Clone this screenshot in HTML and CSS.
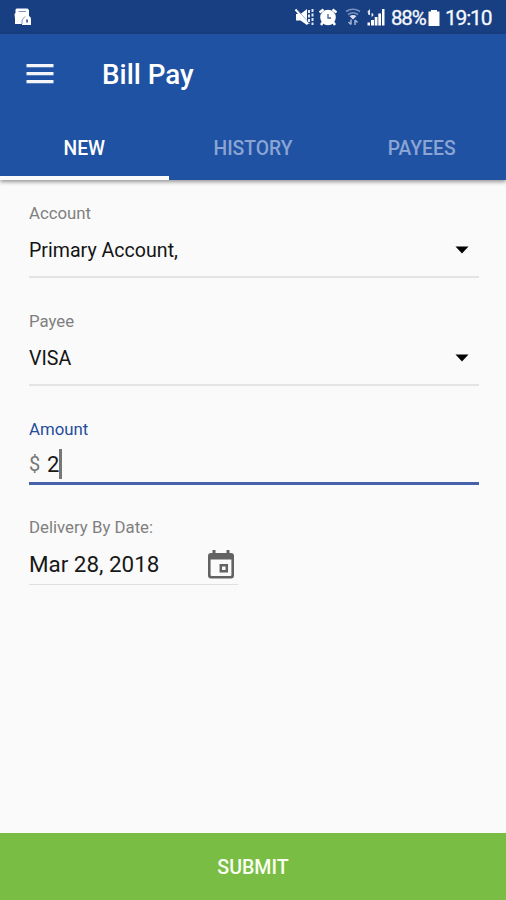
FILE: index.html
```html
<!DOCTYPE html>
<html lang="en">
<head>
<meta charset="utf-8">
<title>Bill Pay</title>
<link rel="stylesheet" href="styles.css">
</head>
<body>
<div class="screen">
  <div class="status">
    <svg class="note" width="18" height="18" viewBox="0 0 18 18"><path fill="#fff" d="M2.500 .5h11L15 2v6q2 1 2 3v6H8v-1H1V11L.5 6 1.500 5V1.500z"/><path stroke="#7d94bf" fill="none" d="M4.500 3.500h7.500"/><path stroke="#8298c2" fill="none" d="M8 16v-4l3-3.500"/><path fill="#183f82" d="M12.300 11.500h1.500v3h-1.500z"/></svg>
    <div class="indicators">
      <svg class="mute" width="19" height="18" viewBox="0 0 19 18"><path fill="#fff" d="M1 6h4.500L12 1v16l-6.500-4.500H1z"/><path stroke="#fff" stroke-width="2" fill="none" d="M.5 1.500L13 16"/><path stroke="#7d94bf" stroke-width=".7" fill="none" d="M2.500 2L13 13.500"/><path stroke="#e3e9f5" stroke-width="2" stroke-dasharray="3 1.500" fill="none" d="M14 2v14M17.500 1v16"/></svg>
      <svg class="alarm" width="18" height="18" viewBox="0 0 18 18"><circle cx="9" cy="9.500" r="7.800" fill="#fff"/><path stroke="#fff" stroke-width="2.500" fill="none" d="M.5 4.500l4-3M17.500 4.500l-4-3M4 14l-2 3M14 14l2 3"/><path stroke="#3d609f" stroke-width="1.300" fill="none" d="M9 6v4h3"/></svg>
      <svg class="wifi" width="16" height="18" viewBox="0 0 16 18"><path stroke="#7890bf" stroke-width="1.600" fill="none" d="M1 3.500q7-4.500 14 0M3 6.500q5-3.500 10 0"/><path fill="#dce4f3" d="M4.500 8q3.500-2 7 0L8 11.500z"/><path stroke="#a2b3d4" stroke-width="1.500" fill="none" d="M6 11.500v5M3.500 14L6 16.500M10 17v-5M12.500 14.500L10 12"/></svg>
      <svg class="signal" width="18" height="18" viewBox="0 0 18 18"><path fill="#fff" d="M.5 14.500h2.500v3H.5zM4 12h3v5.500H4zM7.700 9h2.800v8.500H7.700zM11.300 5.500H14v12h-2.700zM15 1h2.500v16.500H15z"/><path fill="#dbe3f2" d="M.5 3.500L3 1v6H1.500zM4.500 5v4l2-1.500-.5-2z"/></svg>
      <span class="percent">88%</span>
      <svg class="battery" width="12" height="17" viewBox="0 0 12 17"><path fill="#fff" d="M3 1h6v1.500h2.500V17H.5V2.500H3z"/></svg>
      <span class="clock">19:10</span>
    </div>
  </div>
  <header class="header">
    <div class="bar">
      <svg class="menu" width="28" height="20" viewBox="0 0 28 20"><path fill="#f4f6fc" d="M.5 0h27v3.300H.5zM.5 8h27v3.300H.5zM.5 16h27v3.300H.5z"/></svg>
      <h1 class="title">Bill Pay</h1>
    </div>
    <nav class="tabs">
      <div class="tab active"><span>NEW</span></div>
      <div class="tab"><span>HISTORY</span></div>
      <div class="tab"><span>PAYEES</span></div>
    </nav>
  </header>
  <main class="form">
    <section class="field">
      <div class="label">Account</div>
      <div class="select"><span class="value">Primary Account,</span><svg width="14" height="8" viewBox="0 0 14 8"><path d="M.5 .5h13l-6.500 7z"/></svg></div>
    </section>
    <section class="field">
      <div class="label">Payee</div>
      <div class="select"><span class="value">VISA</span><svg width="14" height="8" viewBox="0 0 14 8"><path d="M.5 .5h13l-6.500 7z"/></svg></div>
    </section>
    <section class="field amount">
      <div class="label">Amount</div>
      <div class="input"><span class="dollar">$</span><span class="number">2</span><span class="caret"></span></div>
    </section>
    <section class="field delivery">
      <div class="label">Delivery By Date:</div>
      <div class="date"><span class="v-date">Mar 28, 2018</span>
        <svg width="26" height="29" viewBox="0 0 26 29"><path fill="#626262" fill-rule="evenodd" d="M4.500 0h3v3h11V0h3v3h1.500q3 0 3 3v19.500q0 3-3 3H3q-3 0-3-3V6q0-3 3-3h1.500zM2.600 9.500v15.500q0 1 1 1h18.800q1 0 1-1V9.500z"/><path fill="none" stroke="#626262" stroke-width="2.500" d="M12.800 15.200h6v6h-6z"/></svg>
      </div>
    </section>
  </main>
  <button class="submit"><span>SUBMIT</span></button>
</div>
</body>
</html>
```
FILE: styles.css
```css
* { box-sizing: border-box; }
body { margin: 0; font-family: Roboto, sans-serif; }
.screen { width: 506px; height: 900px; display: flex; flex-direction: column; background: #fafafa; overflow: hidden; }
.status { height: 34px; flex: none; background: #183f82; display: flex; justify-content: space-between; align-items: center; padding: 0 15px 0 14px; color: #f5f8ff; }
.indicators { display: flex; align-items: center; height: 34px; }
.alarm { margin-left: 5px; }
.wifi { margin-left: 8px; }
.signal { margin-left: 6px; }
.percent { width: 34px; margin-left: 6px; padding-top: 2px; font-size: 20.5px; letter-spacing: -1.2px; white-space: nowrap; -webkit-text-stroke: .3px; }
.battery { margin-left: 3px; }
.clock { width: 46px; margin-left: 5px; padding-top: 2px; font-size: 21px; letter-spacing: -1.2px; white-space: nowrap; -webkit-text-stroke: .3px; }
.header { height: 146px; flex: none; background: #2052a3; box-shadow: 0 2px 4px rgba(0,0,0,.4); }
.bar { height: 80px; display: flex; align-items: center; padding-left: 26px; }
.title { margin: 2px 0 0 48px; color: #fff; font-weight: 500; font-size: 27.8px; line-height: 34px; }
.tabs { height: 66px; display: grid; grid-template-columns: repeat(3, 1fr); }
.tab { height: 66px; display: flex; justify-content: center; border-bottom: 4px solid transparent; color: #8aa5d3; font-weight: 500; font-size: 19.3px; line-height: 69px; }
.active { color: #fff; border-color: #fafafa; }
.form { flex: 1; padding: 23px 27px 0 29px; }
.field { height: 108px; }
.label { height: 20px; line-height: 20px; font-size: 16.8px; color: #808080; }
.select { height: 55px; display: flex; justify-content: space-between; align-items: center; border-bottom: 2px solid #e4e4e4; padding-right: 10px; }
.value { font-size: 19.6px; color: #141414; padding-top: 1px; }
.amount { height: 98px; }
.amount .label { color: #254d9d; }
.input { height: 46px; display: flex; align-items: center; border-bottom: 3px solid #4762ac; font-size: 22px; padding-top: 7px; }
.dollar { color: #777; width: 18px; font-size: 20px; }
.number { color: #181818; width: 12px; }
.caret { width: 3px; height: 30px; background: #777; }
.date { width: 209px; height: 49px; display: flex; align-items: center; justify-content: space-between; border-bottom: 1px solid #e0e0e0; padding: 8px 4px 0 0; margin-top: -1px; }
.v-date { font-size: 22.4px; color: #181818; }
.submit { height: 67px; flex: none; border: 0; padding-top: 2px; background: #79bd45; color: #fafff3; font-family: Roboto, sans-serif; font-weight: 500; font-size: 19.6px; }
```
